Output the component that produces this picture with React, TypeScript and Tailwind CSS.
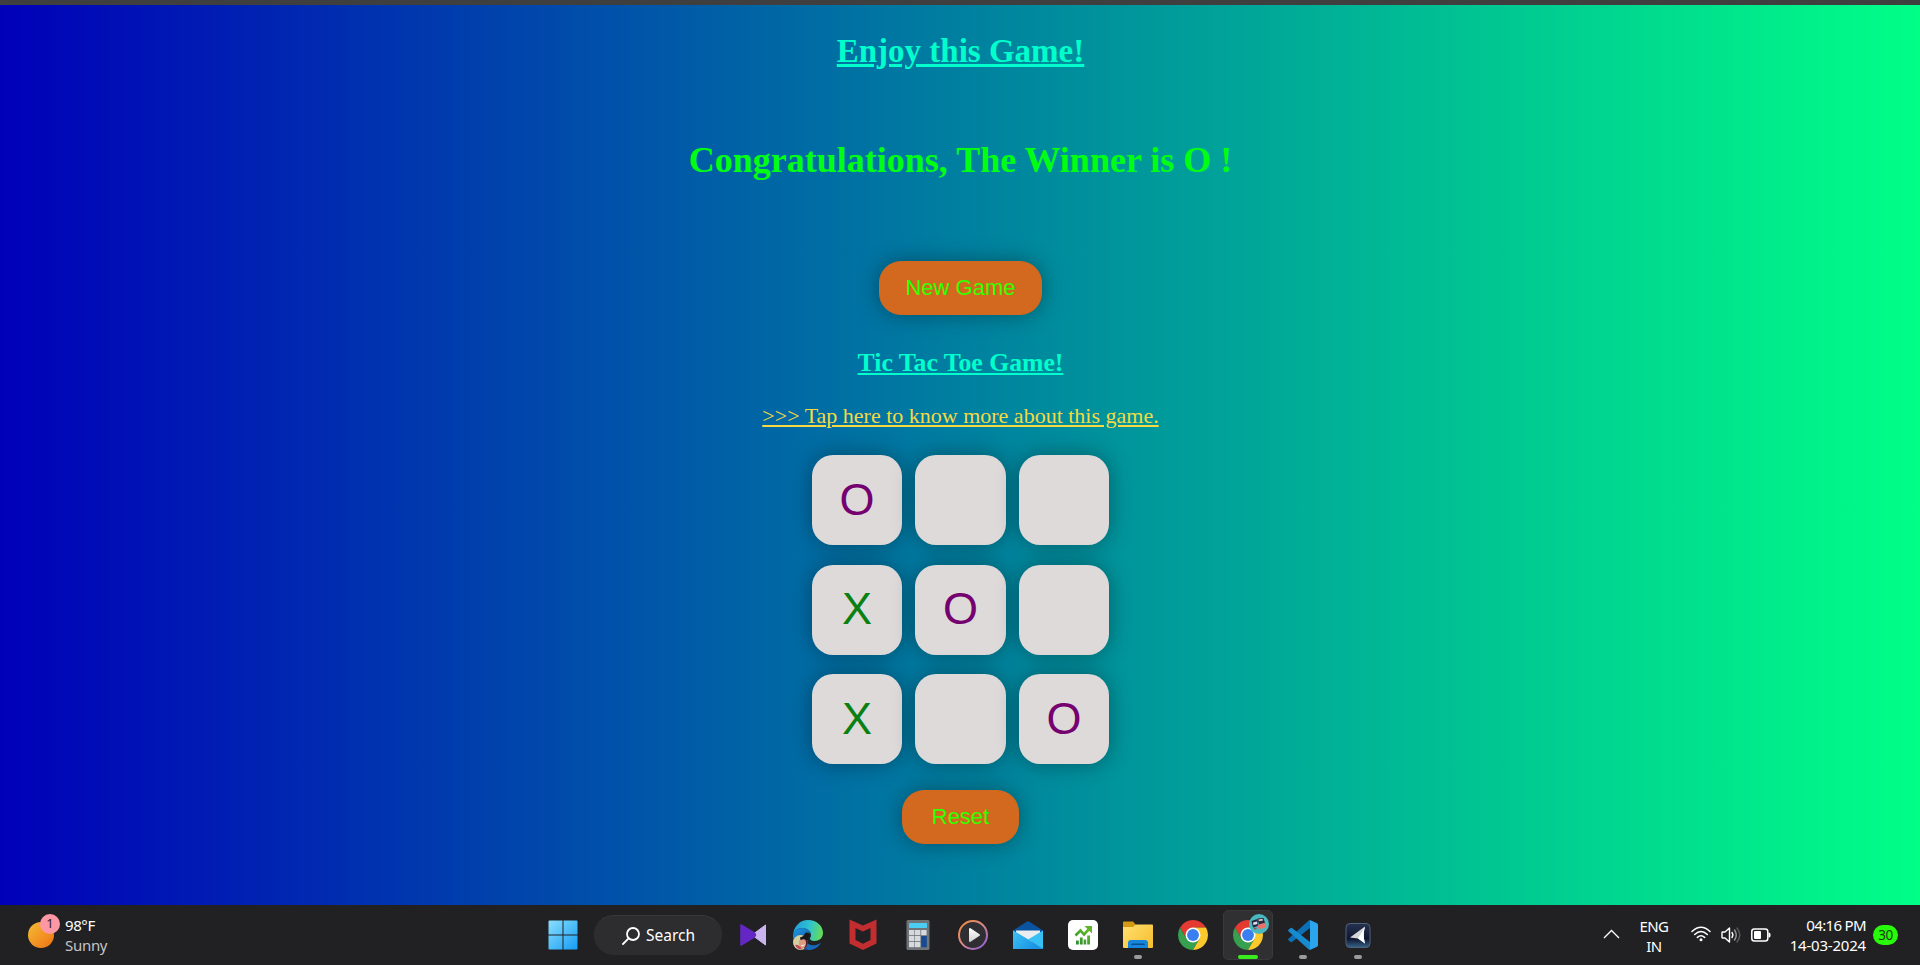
import React from "react";

type Mark = "X" | "O" | "";
const board: Mark[] = ["O", "", "", "X", "O", "", "X", "", "O"];

const shadow = "shadow-[0_0_22px_rgba(0,0,0,0.35)]";

function Cell({ mark }: { mark: Mark }) {
  return (
    <button
      className={`flex h-[90px] items-center justify-center rounded-[21px] bg-[#dddad9] pb-[2px] text-[45px] leading-none ${shadow} ${
        mark === "O" ? "text-[#75006f]" : "text-[#098012]"
      }`}
    >
      {mark}
    </button>
  );
}

function WindowsIcon() {
  return (
    <svg width="30" height="30" viewBox="0 0 30 30">
      <defs>
        <linearGradient id="win" x1="0" y1="0" x2="30" y2="30" gradientUnits="userSpaceOnUse">
          <stop offset="0" stopColor="#8ce0fc" />
          <stop offset="1" stopColor="#129bf4" />
        </linearGradient>
      </defs>
      <path fill="url(#win)" d="M1.5.5H14.500V14.500H.5V1.500Q.5.5 1.5.5ZM15.500.5H28.500Q29.500.5 29.500 1.500V14.500H15.500ZM.5 15.500H14.500V29.500H1.500Q.5 29.500.5 28.500ZM15.500 15.500H29.500V28.500Q29.500 29.500 28.500 29.500H15.500Z" />
    </svg>
  );
}

function ClipIcon() {
  return (
    <svg width="30" height="30" viewBox="0 0 30 30">
      <path d="M27.500 5v20L14 15Z" fill="#c9b4f0" stroke="#c9b4f0" strokeWidth="1" strokeLinejoin="round" />
      <path d="M3 5v20L15.500 17.500q4-2.500 0-5Z" fill="#6527c4" stroke="#6527c4" strokeWidth="1.500" strokeLinejoin="round" />
    </svg>
  );
}

function EdgeIcon() {
  return (
    <svg width="30" height="30" viewBox="0 0 30 30">
      <defs>
        <linearGradient id="edgeTop" x1="2" y1="8" x2="29" y2="14" gradientUnits="userSpaceOnUse">
          <stop offset="0" stopColor="#249fdb" />
          <stop offset=".5" stopColor="#2fc3cf" />
          <stop offset="1" stopColor="#67dc55" />
        </linearGradient>
        <linearGradient id="edgeMid" x1="4" y1="10" x2="18" y2="28" gradientUnits="userSpaceOnUse">
          <stop offset="0" stopColor="#1b8fdc" />
          <stop offset="1" stopColor="#114a8b" />
        </linearGradient>
      </defs>
      <path d="M0 15C1 6 7 0 15 0c9 0 15 6 15 13 0 5-4 8-8.500 8-3.500 0-5-1.500-4.500-3 .8-1.200 1-2 1-3 0-4-4-7-9-7C5 8 1.500 11 0 15Z" fill="url(#edgeTop)" />
      <path d="M0 15c1.500-4 5-7 9.500-7C14 8 18 11 18 14.500c-1-1.500-2.500-2-4-1.500-5 1.500-4 9 2 11.500 4 1.500 8 1 12-1.800C25 28 20 30 15 30 6 30-.5 23 0 15Z" fill="url(#edgeMid)" />
      <path d="M14 14c-3 2-3 7 2 10.500 4 2 8 1 12-1.800-3 4.800-8 7.300-13 7.300-4-4-5-11-1-16Z" fill="#1768bb" />
      <circle cx="7.500" cy="22.500" r="7.500" fill="#d5cfa0" />
      <path d="M10 15.500c3 .5 5 3.500 5 6.500s-1 5-4 7l-2-9Z" fill="#46202a" />
      <path d="M7 19c3-1.500 6 0 6 3.500 0 4-2 6.500-5 6.500-2-2-3-7-1-10Z" fill="#dd9b82" />
      <path d="M7 17.500 11 16q1-5 4-3 1.500 2 .5 4.500l-1 3q-3-2-7-.5Z" fill="#17171c" />
      <path d="M2 25q4-1 7 4.500-5 0-7-4.500Z" fill="#c8495b" />
      <path d="M8.500 25.500q2 .8 3-1" stroke="#fff" fill="none" />
    </svg>
  );
}

function ShieldIcon() {
  return (
    <svg width="30" height="32" viewBox="0 0 30 32">
      <path fill="#c22d2f" fillRule="evenodd" d="M1.500.5 15 6.500 28.500.5V24.500L15 31 1.500 24.500ZM7.500 9V21L15 24.800 22.500 21V9L15 12.500Z" />
    </svg>
  );
}

function CalculatorIcon() {
  return (
    <svg width="24" height="30" viewBox="0 0 24 30">
      <rect x=".5" width="23" height="30" rx="1.500" fill="#6f7479" />
      <rect x="3" y="3" width="18" height="5" rx=".7" fill="#4ccdf4" />
      <g fill="#d6d9de">
        {[10, 16, 22].map((y) => (
          <g key={y}>
            <rect x="3" y={y} width="5.400" height="5.200" />
            <rect x="9" y={y} width="5.400" height="5.200" />
          </g>
        ))}
        <rect x="15.200" y="10" width="5.400" height="5.200" />
      </g>
      <rect x="15.200" y="16" width="5.600" height="11.200" fill="#164a91" />
    </svg>
  );
}

function PlayerIcon() {
  return (
    <svg width="30" height="30" viewBox="0 0 30 30">
      <defs>
        <linearGradient id="ring" x1="4" y1="3" x2="26" y2="27" gradientUnits="userSpaceOnUse">
          <stop offset="0" stopColor="#f08a44" />
          <stop offset=".5" stopColor="#d98a8b" />
          <stop offset="1" stopColor="#9361d4" />
        </linearGradient>
        <linearGradient id="tri" x1="0" y1="8" x2="0" y2="22" gradientUnits="userSpaceOnUse">
          <stop offset="0" stopColor="#fff" />
          <stop offset="1" stopColor="#cfcfcf" />
        </linearGradient>
      </defs>
      <circle cx="15" cy="15" r="14" fill="#2f2f33" stroke="url(#ring)" strokeWidth="2" />
      <path d="M12 9v12l9-6Z" fill="url(#tri)" stroke="url(#tri)" strokeWidth="2" strokeLinejoin="round" />
    </svg>
  );
}

function MailIcon() {
  return (
    <svg width="30" height="28" viewBox="0 0 30 28">
      <defs>
        <linearGradient id="mail" x1="0" y1="10" x2="20" y2="28" gradientUnits="userSpaceOnUse">
          <stop offset="0" stopColor="#3cc3f5" />
          <stop offset="1" stopColor="#1c93e3" />
        </linearGradient>
      </defs>
      <path d="M0 9.500 14 .6q1-.6 2 0L30 9.500V15H0Z" fill="#0a53a0" />
      <path d="M3 9.500H27V16L15 23 3 16Z" fill="#e9edf0" />
      <path d="M0 9.500 30 27.500H0Z" fill="#29a9ee" />
      <path d="M30 9.500V28L15 18.500Z" fill="#38c0f5" />
      <path d="M0 9.500 15 18.500 30 28H0Z" fill="url(#mail)" />
    </svg>
  );
}

function StocksIcon() {
  return (
    <svg width="30" height="30" viewBox="0 0 30 30">
      <defs>
        <linearGradient id="stock" x1="8" y1="24" x2="24" y2="6" gradientUnits="userSpaceOnUse">
          <stop offset="0" stopColor="#2d8a33" />
          <stop offset="1" stopColor="#73cc25" />
        </linearGradient>
      </defs>
      <rect width="30" height="30" rx="5" fill="#fff" />
      <path d="M8 20.500h2.800v4H8ZM11.900 17.500h2.800v7h-2.800ZM15.600 19.500h2.600v5h-2.600ZM19.200 15.500H22v9h-2.800Z" fill="url(#stock)" />
      <path d="m7.500 15.500 5-5 3.500 4 6-6.500" stroke="url(#stock)" strokeWidth="2.600" fill="none" />
      <path d="M16.500 6H24v7.500Z" fill="#5eb52a" />
    </svg>
  );
}

function FolderIcon() {
  return (
    <svg width="30" height="28" viewBox="0 0 30 28">
      <defs>
        <linearGradient id="folder" x1="0" y1="4" x2="27" y2="28" gradientUnits="userSpaceOnUse">
          <stop offset="0" stopColor="#ffdf70" />
          <stop offset="1" stopColor="#f6bf31" />
        </linearGradient>
      </defs>
      <path d="M0 1.500Q0 .5 1 .5H10l3.500 4H20V10H0Z" fill="#d59a13" />
      <path d="M0 6H10l3-2.500H29q1 0 1 1V26q0 1-1 1H1q-1 0-1-1Z" fill="url(#folder)" />
      <path d="M5 27V22q0-3 3-3H22q3 0 3 3v5Z" fill="#1686dd" />
      <path d="M8 24q0-1.500 1.500-1.500H20.500Q22 22.500 22 24H8Z" fill="#0b4c8d" />
    </svg>
  );
}

function ChromeIcon() {
  return (
    <svg width="30" height="30" viewBox="0 0 48 48">
      <path d="M3.220 12A24 24 0 0 1 44.780 12H24L13.600 30Z" fill="#e53a31" />
      <path d="M3.220 12 13.600 30 34.400 30 24 48A24 24 0 0 1 3.220 12Z" fill="#36a04f" />
      <path d="M24 48 34.400 30 24 12H44.780A24 24 0 0 1 24 48Z" fill="#fcc92c" />
      <circle cx="24" cy="24" r="12" fill="#fff" />
      <circle cx="24" cy="24" r="9.500" fill="#397ff0" />
    </svg>
  );
}

function CodeIcon() {
  return (
    <svg width="30" height="30" viewBox="0 0 30 30">
      <path d="M22 1v7L4 22q-.7.6-1.400 0L.5 20.200q-.8-.7 0-1.400L20.500.8Z" fill="#0d70b6" />
      <path d="M22 29v-7L4 8q-.7-.6-1.400 0L.5 9.800q-.8.700 0 1.400L20.500 29.200Z" fill="#178bd0" />
      <path d="M20.500.8Q21.500-.2 23 .4l6 2.900q1 .5 1 1.600V25q0 1.200-1 1.700l-6 2.900q-1.500.6-2.500-.4 1.500.6 1.500-1.200V2q0-1.800-1.500-1.200Z" fill="#2ba5ee" />
    </svg>
  );
}

function PlaneIcon() {
  return (
    <svg width="26" height="26" viewBox="0 0 26 26">
      <defs>
        <linearGradient id="plane" x1="0" y1="0" x2="0" y2="26" gradientUnits="userSpaceOnUse">
          <stop offset="0" stopColor="#283453" />
          <stop offset=".65" stopColor="#101631" />
          <stop offset="1" stopColor="#376a8d" />
        </linearGradient>
      </defs>
      <rect x="1" y="1.500" width="24" height="24" rx="4" fill="url(#plane)" stroke="#51617e" />
      <path d="M20 4.500Q17.500 13 20 21.500L13 16.500 5 15.500Z" fill="#d4d5d8" />
      <path d="M20 4.500Q17.500 13 20 21.500L13 16.500Z" fill="#fff" />
    </svg>
  );
}

function ProfileBadge() {
  return (
    <svg className="absolute top-[3px] left-[25px]" width="20" height="20" viewBox="0 0 20 20">
      <circle cx="10" cy="10" r="10" fill="#47b9bf" />
      <path d="m2.500 7 6-2 1 7-5.500 1.500Z" fill="#262744" />
      <path d="m8.500 4.500 6-.5 1.500 5-6 1.500Z" fill="#33243a" />
      <path d="m4 8.500 4-1 .5 2.500-4 1ZM9.500 5.500l4-.5.5 1.500-4 .5Z" fill="#e8dfe5" />
      <path d="M8 12q4-3.500 9-2.500 1 2-1 4.500-4 1-7 .5Z" fill="#ed6f6b" />
      <path d="M4 13.500q2-.5 4 1l-2 1.500Z" fill="#9a5660" />
    </svg>
  );
}

function Slot({
  children,
  active,
  running,
}: {
  children: React.ReactNode;
  active?: boolean;
  running?: boolean;
}) {
  return (
    <div
      className={`relative flex h-[50px] w-[50px] items-center justify-center rounded-[5px] ${
        active ? "border border-[#39393b] bg-[#303033]" : ""
      }`}
    >
      {children}
      {running && <span className="absolute bottom-px left-[21px] h-1 w-2 rounded-full bg-[#9b9b9d]" />}
      {active && <span className="absolute bottom-0 left-[14px] h-1 w-5 rounded-full bg-[#39ed1f]" />}
    </div>
  );
}

function Tray() {
  return (
    <div className="flex items-start pr-[22px] font-['Noto_Sans',sans-serif] text-[15px] leading-5">
      <svg className="mt-[24px]" width="17" height="10" viewBox="0 0 17 10" fill="none" stroke="#fff" strokeWidth="1.300">
        <path d="m1 9 7.500-7.500L16 9" />
      </svg>
      <div className="ml-[19px] w-[30px] pt-[11px] text-center tracking-[-0.6px]">
        <div>ENG</div>
        <div>IN</div>
      </div>
      <svg className="mt-[20px] ml-[22px]" width="20" height="18" viewBox="0 0 20 18" fill="none" stroke="#fff" strokeWidth="1.500" strokeLinecap="round">
        <path d="M1 6.500q9-8.500 18 0M3.700 9.500q6.300-6 12.600 0M6.400 12.400q3.600-3.400 7.200 0" />
        <circle cx="10" cy="14.800" r="1.500" fill="#fff" stroke="none" />
      </svg>
      <svg className="mt-[21px] ml-[10px]" width="20" height="18" viewBox="0 0 20 18" fill="none" strokeWidth="1.400" strokeLinecap="round" strokeLinejoin="round">
        <path d="M1 6.500Q1 6 1.500 6H4L8.500 2V16L4 12H1.500Q1 12 1 11.500Z" stroke="#fff" />
        <path d="M11 6.500q1.800 2.500 0 5" stroke="#fff" />
        <path d="M13.500 4q3.500 5 0 10" stroke="#98989a" />
        <path d="M16 2q5.500 7 0 14" stroke="#59595c" />
      </svg>
      <svg className="mt-[23px] ml-[10px]" width="20" height="14" viewBox="0 0 20 14">
        <rect x=".8" y="1" width="16" height="12" rx="2.500" fill="none" stroke="#fff" strokeWidth="1.500" />
        <rect x="3" y="3" width="7" height="8" rx="1" fill="#fff" />
        <path d="M17.500 4.500q2 0 2 1.500v2q0 1.500-2 1.500Z" fill="#fff" />
      </svg>
      <div className="ml-[15px] w-[80px] pt-[10px] text-right whitespace-nowrap">
        <div className="tracking-[-0.65px]">04:16 PM</div>
        <div className="tracking-[-0.2px]">14-03-2024</div>
      </div>
      <div className="mt-5 ml-[7px] flex h-5 w-[25px] items-center justify-center rounded-full bg-[#28fb0a] text-[13.5px] tracking-[-0.4px] text-[#173a11]">
        30
      </div>
    </div>
  );
}

function Taskbar() {
  return (
    <footer className="grid h-[60px] grid-cols-[536px_1fr_auto] bg-[#212124] text-white">
      <div className="flex items-start pt-[8px] pl-7">
        <div className="relative mt-[9px] h-[26px] w-[26px] rounded-full bg-linear-to-br from-[#f2bd36] to-[#ef7011]">
          <span className="absolute -top-[8px] left-[12px] flex h-5 w-5 items-center justify-center rounded-full bg-[#fd97a3] font-['Noto_Sans',sans-serif] text-[13px] text-[#33191d]">
            1
          </span>
        </div>
        <div className="ml-[11px] pt-[2px] font-['Noto_Sans',sans-serif] text-[15px] leading-5">
          <div className="tracking-[-0.4px]">98°F</div>
          <div className="tracking-[-0.3px] text-[#c4c4c5]">Sunny</div>
        </div>
      </div>
      <div className="flex items-start gap-[5px] pt-[5px]">
        <div className="flex h-[50px] w-[53px] items-center justify-center">
          <WindowsIcon />
        </div>
        <div className="mt-[5px] flex h-10 w-32 items-center rounded-full border-t border-[#39393b] bg-[#2d2d30] pl-7">
          <svg width="18" height="18" viewBox="0 0 18 18" fill="none" stroke="#fff" strokeWidth="1.800" strokeLinecap="round">
            <circle cx="11" cy="7" r="6" />
            <path d="m6.600 11.400-5.600 5.600" />
          </svg>
          <span className="ml-[6px] font-['Noto_Sans',sans-serif] text-[15.5px]">Search</span>
        </div>
        <div className="ml-px flex gap-[5px]">
          <Slot><ClipIcon /></Slot>
          <Slot><EdgeIcon /></Slot>
          <Slot><ShieldIcon /></Slot>
          <Slot><CalculatorIcon /></Slot>
          <Slot><PlayerIcon /></Slot>
          <Slot><MailIcon /></Slot>
          <Slot><StocksIcon /></Slot>
          <Slot running><FolderIcon /></Slot>
          <Slot><ChromeIcon /></Slot>
          <Slot active><ChromeIcon /><ProfileBadge /></Slot>
          <Slot running><CodeIcon /></Slot>
          <Slot running><PlaneIcon /></Slot>
        </div>
      </div>
      <Tray />
    </footer>
  );
}

export default function App() {
  return (
    <div className="flex h-[965px] w-full flex-col overflow-hidden">
      <div className="h-[5px] bg-[#3f3f3f]" />
      <main className="flex min-h-0 flex-1 flex-col items-center bg-[linear-gradient(to_right,#0000b9,#00ff87)] pl-px font-['Liberation_Serif',serif]">
        <h1 className="mt-[27px] text-[33px] leading-[38px] font-bold text-[#0fc] underline">Enjoy this Game!</h1>
        <h2 className="mt-[69px] text-[36px] leading-[42px] font-bold text-[#00ff12]">Congratulations, The Winner is O !</h2>
        <button className={`mt-[80px] h-[54px] w-[163px] rounded-[22px] bg-[#d2691e] pb-[2px] font-['Liberation_Sans',sans-serif] text-[22px] text-[#3f0] ${shadow}`}>
          New Game
        </button>
        <h3 className="mt-[33px] text-[25.7px] leading-[30px] font-bold text-[#0fc] underline">Tic Tac Toe Game!</h3>
        <a className="mt-[25px] text-[22px] leading-[26px] text-[#f4d943] underline">
          &gt;&gt;&gt; Tap here to know more about this game.
        </a>
        <div className="mt-[26px] grid grid-cols-[90px_91px_90px] gap-x-[13px] gap-y-[19.500px] font-['Liberation_Sans',sans-serif]">
          {board.map((mark, i) => (
            <Cell key={i} mark={mark} />
          ))}
        </div>
        <button className={`mt-[26px] h-[54px] w-[117px] rounded-[22px] bg-[#d2691e] pb-[2px] font-['Liberation_Sans',sans-serif] text-[22px] text-[#3f0] ${shadow}`}>
          Reset
        </button>
      </main>
      <Taskbar />
    </div>
  );
}
